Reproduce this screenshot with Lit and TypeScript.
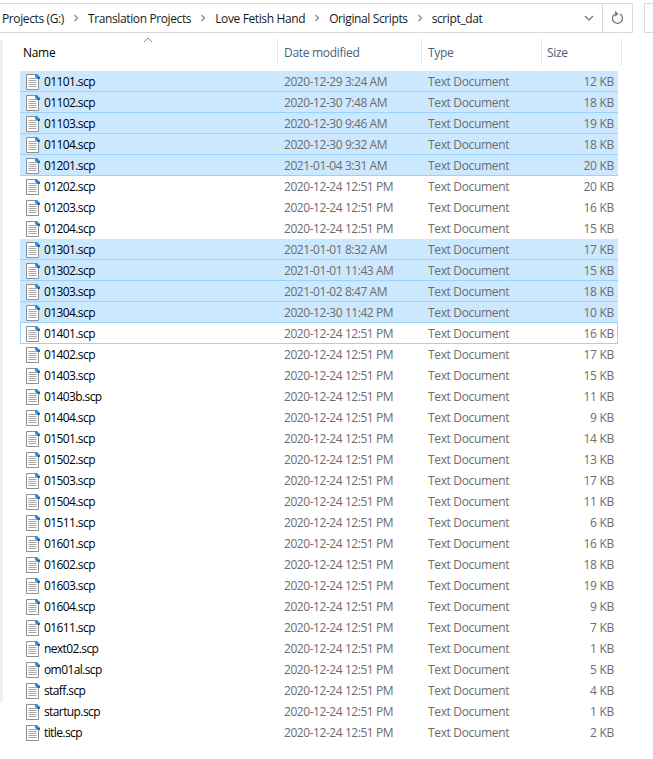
import { LitElement, html, css, svg } from "lit";
import { customElement } from "lit/decorators.js";

type Row = [string, string, string, number?];
const D = "2020-12-24 12:51 PM";
const rows: Row[] = [
  ["01101.scp", "2020-12-29 3:24 AM", "12 KB", 1],
  ["01102.scp", "2020-12-30 7:48 AM", "18 KB", 1],
  ["01103.scp", "2020-12-30 9:46 AM", "19 KB", 1],
  ["01104.scp", "2020-12-30 9:32 AM", "18 KB", 1],
  ["01201.scp", "2021-01-04 3:31 AM", "20 KB", 1],
  ["01202.scp", D, "20 KB"],
  ["01203.scp", D, "16 KB"],
  ["01204.scp", D, "15 KB"],
  ["01301.scp", "2021-01-01 8:32 AM", "17 KB", 1],
  ["01302.scp", "2021-01-01 11:43 AM", "15 KB", 1],
  ["01303.scp", "2021-01-02 8:47 AM", "18 KB", 1],
  ["01304.scp", "2020-12-30 11:42 PM", "10 KB", 1],
  ["01401.scp", D, "16 KB", 2],
  ["01402.scp", D, "17 KB"],
  ["01403.scp", D, "15 KB"],
  ["01403b.scp", D, "11 KB"],
  ["01404.scp", D, "9 KB"],
  ["01501.scp", D, "14 KB"],
  ["01502.scp", D, "13 KB"],
  ["01503.scp", D, "17 KB"],
  ["01504.scp", D, "11 KB"],
  ["01511.scp", D, "6 KB"],
  ["01601.scp", D, "16 KB"],
  ["01602.scp", D, "18 KB"],
  ["01603.scp", D, "19 KB"],
  ["01604.scp", D, "9 KB"],
  ["01611.scp", D, "7 KB"],
  ["next02.scp", D, "1 KB"],
  ["om01al.scp", D, "5 KB"],
  ["staff.scp", D, "4 KB"],
  ["startup.scp", D, "1 KB"],
  ["title.scp", D, "2 KB"],
];

const fileIcon = svg`<svg class="ico" width="14" height="16" viewBox="0 0 14 16">
  <path d="M0.5 0.5H9.5L12.5 3.5V15.5H0.5Z" fill="#fff" stroke="#8f8f8f"/>
  <path d="M2.5 4.5H10.5M2.5 6.5H10.5M2.5 8.5H10.5M2.5 10.5H10.5M2.5 12.5H10.5" stroke="#a6a6a6"/>
  <path d="M9 0H11L14 3V5H11.5L9 3Z" fill="#2f8fdf"/>
  <path d="M11 3H14V5H11.5Z" fill="#1f6fb5"/>
</svg>`;

@customElement("app-root")
export class AppRoot extends LitElement {
  static styles = css`
    :host { display: block; width: 653px; height: 759px; overflow: hidden; background: #fff;
      font-family: "Open Sans", "Noto Sans", sans-serif; font-size: 12px; letter-spacing: -0.3px; color: #000; }
    .top { display: flex; height: 30px; margin-top: 3px; }
    .addr { width: 633px; box-sizing: border-box; border: 1px solid #d9d9d9; border-left: none;
      display: flex; align-items: center; }
    .crumbs { flex: 1; display: flex; align-items: center; padding-left: 2px; color: #1a1a1a; white-space: nowrap; letter-spacing: -0.38px; }
    .sep { width: 24px; display: flex; justify-content: center; }
    .drop { width: 30px; display: flex; justify-content: center; padding-left: 4px; box-sizing: border-box; }
    .refresh { width: 30px; height: 100%; border-left: 1px solid #d9d9d9; display: flex; align-items: center; justify-content: center; box-sizing: border-box; }
    .search { width: 9px; margin-left: 11px; border: 1px solid #d9d9d9; border-right: none; box-sizing: border-box; }
    .body { display: flex; height: 726px; align-items: flex-start; }
    .pane { width: 3px; height: 663px; margin-top: 7px; background: #f0f0f0; flex: none; }
    .list { margin-left: 17px; width: 598px; }
    .head { height: 38px; display: grid; grid-template-columns: 258px 144px 120px 80px; position: relative; color: #4c607a; }
    .hc { height: 26px; margin-top: 6px; border-right: 1px solid #e5e5e5; display: flex; align-items: center; padding-left: 6px; box-sizing: border-box; }
    .hc.name { padding-left: 3px; }
    .hc.sz { padding-left: 5px; }
    .caret { position: absolute; left: 123px; top: 4px; }
    .row { height: 21px; display: grid; grid-template-columns: 258px 144px 114px 82px; align-items: center; box-sizing: border-box; color: #6d6d6d; }
    .row.sel { background: #cce8ff; box-shadow: inset 0 -1px 0 #99d1ff; }
    .row.focus { box-shadow: inset 1px 0 0 #99d1ff, inset -1px 0 0 #99d1ff, inset 0 -1px 0 #99d1ff; }
    .name { display: flex; align-items: center; color: #000; white-space: nowrap; }
    .cell-name { padding-left: 6px; gap: 4px; letter-spacing: -0.6px; }
    .ico { flex: none; }
    .date { padding-left: 6px; letter-spacing: -0.44px; }
    .type { padding-left: 6px; letter-spacing: -0.34px; }
    .size { text-align: right; padding-right: 4px; }
  `;

  render() {
    const crumbs = ["Projects (G:)", "Translation Projects", "Love Fetish Hand", "Original Scripts", "script_dat"];
    return html`
      <div class="top">
        <div class="addr">
          <div class="crumbs">
            ${crumbs.map((c, i) => html`${i ? html`<span class="sep"><svg width="6" height="8" viewBox="0 0 6 8"><path d="M1.5 1L4.5 4L1.5 7" fill="none" stroke="#8a8a8a" stroke-width="1.2"/></svg></span>` : ""}<span>${c}</span>`)}
          </div>
          <div class="drop"><svg width="10" height="6" viewBox="0 0 10 6"><path d="M1 1L5 5L9 1" fill="none" stroke="#7a7a7a" stroke-width="1.3"/></svg></div>
          <div class="refresh"><svg width="12" height="14" viewBox="0 0 12 14"><path d="M4 2.5A5 5 0 1 0 8 3" fill="none" stroke="#6d6d6d" stroke-width="1.2"/><path d="M3 0.5L5.5 2.7L3 5" fill="none" stroke="#6d6d6d" stroke-width="1.2"/></svg></div>
        </div>
        <div class="search"></div>
      </div>
      <div class="body">
        <div class="pane"></div>
        <div class="list">
          <div class="head">
            <svg class="caret" width="10" height="6" viewBox="0 0 10 6"><path d="M1 5L5 1L9 5" fill="none" stroke="#8a8a8a"/></svg>
            <div class="hc name">Name</div><div class="hc">Date modified</div><div class="hc">Type</div><div class="hc sz">Size</div>
          </div>
          ${rows.map((r) => html`
            <div class="row ${r[3] === 1 ? "sel" : r[3] === 2 ? "focus" : ""}">
              <div class="name cell-name">${fileIcon}<span>${r[0]}</span></div>
              <div class="date">${r[1]}</div>
              <div class="type">Text Document</div>
              <div class="size">${r[2]}</div>
            </div>`)}
        </div>
      </div>
    `;
  }
}
